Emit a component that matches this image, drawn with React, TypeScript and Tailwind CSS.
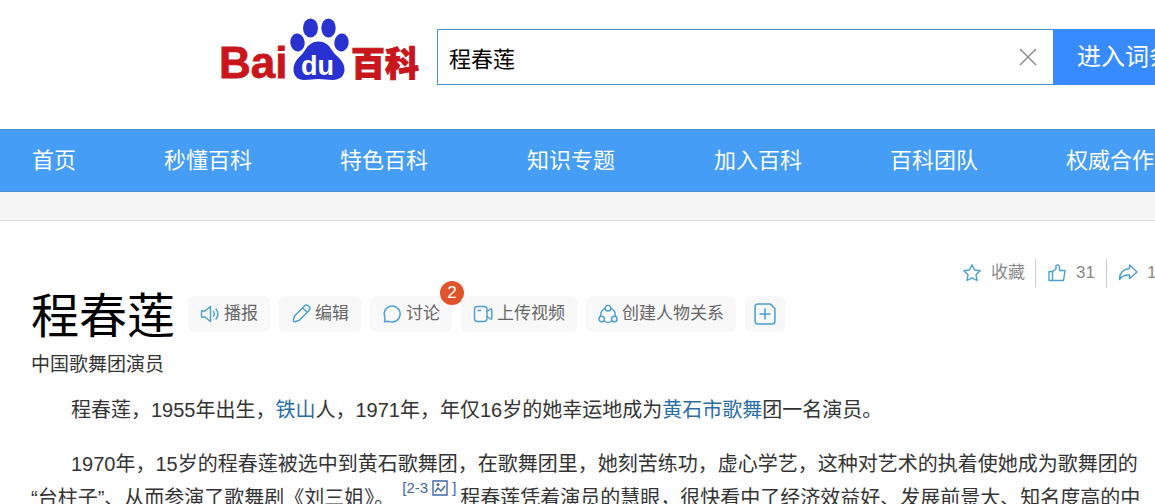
import React from "react";

const navItems = [
  { name: "首页", cell: "" },
  { name: "秒懂百科", cell: "" },
  { name: "特色百科", cell: "" },
  { name: "知识专题", cell: "px-[11px]" },
  { name: "加入百科", cell: "" },
  { name: "百科团队", cell: "" },
  { name: "权威合作", cell: "" },
];

const Icon: React.FC<{ className?: string; children: React.ReactNode }> = ({
  className = "h-5 w-5",
  children,
}) => (
  <svg
    viewBox="0 0 20 20"
    className={`${className} shrink-0 text-[#4b9fcf]`}
    fill="none"
    stroke="currentColor"
    strokeWidth="1.4"
    strokeLinecap="round"
    strokeLinejoin="round"
    aria-hidden="true"
  >
    {children}
  </svg>
);

const Logo: React.FC = () => (
  <svg viewBox="0 0 204 76" className="h-[76px] w-[204px]">
    <text x="-1" y="60" fill="#c9161d" stroke="#c9161d" strokeWidth="0.8" fontSize="44" fontWeight="700" fontFamily="Liberation Sans, sans-serif">
      Bai
    </text>
    <g fill="#2932d0">
      <ellipse cx="77.5" cy="24.5" rx="7.2" ry="9" transform="rotate(-8 77.5 24.5)" />
      <ellipse cx="90.5" cy="10" rx="7.5" ry="9.4" />
      <ellipse cx="108.5" cy="10" rx="7.2" ry="9.4" />
      <ellipse cx="121.5" cy="24.5" rx="7.2" ry="9" transform="rotate(8 121.5 24.5)" />
      <path d="M98.500 23.500C106 23.500 109.500 28 112.500 33C116 38.500 124.500 42 124.500 51.500C124.500 58.500 119 62 113 62C107 62 104 61 98.500 61C93 61 90 62 84 62C78 62 73.500 58 73.500 51.500C73.500 42 81 38.500 84.500 33C87.500 28 91 23.500 98.500 23.500Z" />
    </g>
    <text x="81" y="57" fill="#fff" fontSize="27" fontWeight="700" fontFamily="Liberation Sans, sans-serif">
      du
    </text>
    <text x="131" y="58" fill="#c9161d" stroke="#c9161d" strokeWidth="1" fontSize="34" fontWeight="900" fontFamily="Noto Sans CJK SC, sans-serif">
      百科
    </text>
  </svg>
);

const actions = [
  {
    name: "播报",
    icon: (
      <>
        <path d="M1.500 7H5L10.500 2.500V17.500L5 13H1.500Z" />
        <path d="M13.500 7.500Q15 10 13.500 12.500M16 5Q20 10 16 15" />
      </>
    ),
  },
  {
    name: "编辑",
    icon: (
      <g transform="rotate(45 10 10)">
        <path d="M6.800 1.500Q6.800 -1 10 -1T13.200 1.500V16L11 20Q10 21 9 20L6.800 16ZM6.800 4.500H13.200" />
      </g>
    ),
  },
  {
    name: "讨论",
    badge: 2,
    icon: <path d="M2.500 17.800L3 13.500A8 8 0 1 1 7 17.300Z" />,
  },
  {
    name: "上传视频",
    icon: (
      <>
        <rect x="1.500" y="2.500" width="12.500" height="15" rx="3" />
        <path d="M14 7.500L17.500 5Q18.800 4.500 18.800 6V14Q18.800 15.500 17.500 15L14 12.500M5 6.500H7.500" />
      </>
    ),
  },
  {
    name: "创建人物关系",
    icon: (
      <>
        <circle cx="10" cy="4.200" r="2.800" />
        <circle cx="3.700" cy="15" r="2.800" />
        <circle cx="16.300" cy="15" r="2.800" />
        <path d="M7.300 4.200Q2.500 6.500 2.500 12M12.700 4.200Q17.500 6.500 17.500 12M6.500 17.500Q10 19.500 13.500 17.500" />
      </>
    ),
  },
];

const App: React.FC = () => {
  return (
    <div className="h-screen overflow-hidden bg-white font-['Liberation_Sans','Noto_Sans_CJK_SC',sans-serif] text-[#333]">
      <header className="flex h-[129px] items-start overflow-hidden pl-[220px]">
        <a href="/" className="mt-[18px] shrink-0" aria-label="Baidu百科">
          <Logo />
        </a>
        <form className="mt-[29px] ml-[13px] flex h-14 flex-1" onSubmit={(e) => e.preventDefault()}>
          <div className="flex min-w-0 flex-1 items-center border border-r-0 border-[#4b8fc9] pr-4 pl-[11px]">
            <input
              aria-label="词条"
              defaultValue="程春莲"
              className="h-full min-w-0 flex-1 text-[22px] text-black outline-none"
            />
            <button type="button" aria-label="清除">
              <svg viewBox="0 0 18 18" className="h-[18px] w-[18px]" stroke="#8c8c8c" strokeWidth="1.5">
                <path d="M1 1L17 17M17 1L1 17" />
              </svg>
            </button>
          </div>
          <button className="w-[102px] shrink-0 overflow-hidden bg-[#388bff] pl-6 text-left text-2xl whitespace-nowrap text-white">
            进入词条
          </button>
        </form>
      </header>

      <nav className="flex h-[63px] items-center gap-[88px] overflow-hidden border-y border-[#4c92d6] bg-[#459df5] pl-8 text-[22px] whitespace-nowrap text-white">
        {navItems.map((item) => (
          <a key={item.name} href="/" className={`shrink-0 ${item.cell}`}>
            {item.name}
          </a>
        ))}
      </nav>
      <div className="h-[29px] border-b border-[#ddd] bg-[#f5f5f5]" />

      <main className="pl-[31px]">
        <div className="flex h-[66px] items-end justify-end text-[17px] leading-7 text-[#888]">
          <button className="flex items-center gap-[9px] pr-[10px]">
            <Icon>
              <path d="M10 1.800L12.500 7L18.200 7.800L14 11.800L15 17.500L10 14.800L5 17.500L6 11.800L1.800 7.800L7.500 7Z" />
            </Icon>
            收藏
          </button>
          <button className="flex items-center gap-[9px] border-l border-[#ccc] px-[11px]">
            <Icon>
              <path d="M2 8.500H5.500V17.500H2ZM5.500 8.500L9 6V2.500Q11.500 1 12.500 3.500V7.500H18L16.500 17.500H5.500" />
            </Icon>
            31
          </button>
          <button className="flex w-[49px] items-center gap-[9px] overflow-hidden border-l border-[#ccc] pl-[11px]">
            <Icon>
              <path d="M11.500 2L19 9L11.500 15.500V12Q5 11.500 1.500 16.500Q1.500 6.500 11.500 5.500Z" />
            </Icon>
            1
          </button>
        </div>

        <div className="flex h-[60px] items-center">
          <h1 className="mr-[13px] text-5xl leading-[60px] text-black">程春莲</h1>
          <div className="mb-1.5 flex gap-[9px] text-[17px] text-[#666]">
            {actions.map((action) => (
              <button
                key={action.name}
                className="relative flex h-9 items-center gap-1 rounded-md bg-[#f8f8f8] px-3 whitespace-nowrap"
              >
                <Icon>{action.icon}</Icon>
                {action.name}
                {action.badge && (
                  <span className="absolute -top-[15px] -right-3 h-6 w-6 rounded-full bg-[#e1532a] text-center leading-6 text-white">
                    {action.badge}
                  </span>
                )}
              </button>
            ))}
            <button aria-label="添加" className="flex h-9 w-10 items-center justify-center rounded-md bg-[#f8f8f8]">
              <Icon className="h-[22px] w-[22px]">
                <path d="M3.500 1H15L19 5V16.500Q19 19 16.500 19H3.500Q1 19 1 16.500V3.500Q1 1 3.500 1ZM10 5.500V14.500M5.500 10H14.500" />
              </Icon>
            </button>
          </div>
        </div>
        <p className="mt-0.5 text-[19px] leading-8">中国歌舞团演员</p>

        <article className="mt-3 text-xl leading-[34px] whitespace-nowrap">
          <p className="indent-[2em]">
            程春莲，1955年出生，
            <a href="/" className="text-[#2b6ea6]">铁山</a>
            人，1971年，年仅16岁的她幸运地成为
            <a href="/" className="text-[#2b6ea6]">黄石市歌舞</a>
            团一名演员。
          </p>
          <p className="mt-5 indent-[2em]">
            1970年，15岁的程春莲被选中到黄石歌舞团，在歌舞团里，她刻苦练功，虚心学艺，这种对艺术的执着使她成为歌舞团的
            <br />
            “台柱子”、从而参演了歌舞剧《刘三姐》。
            <sup className="-top-3 mr-1 ml-2 inline-flex items-center indent-0 text-[15px] leading-4 text-[#3f66a8]">
              [2-3
              <svg viewBox="0 0 16 16" className="mx-1 h-4 w-4" fill="none" stroke="currentColor" strokeWidth="1.4">
                <path d="M1 1H15V15H1ZM3 12L6 8L9 11L13 6" />
                <circle cx="6" cy="4.500" r="0.800" fill="currentColor" />
              </svg>
              ]
            </sup>
            程春莲凭着演员的慧眼，很快看中了经济效益好、发展前景大、知名度高的中
          </p>
        </article>
      </main>
    </div>
  );
};

export default App;
